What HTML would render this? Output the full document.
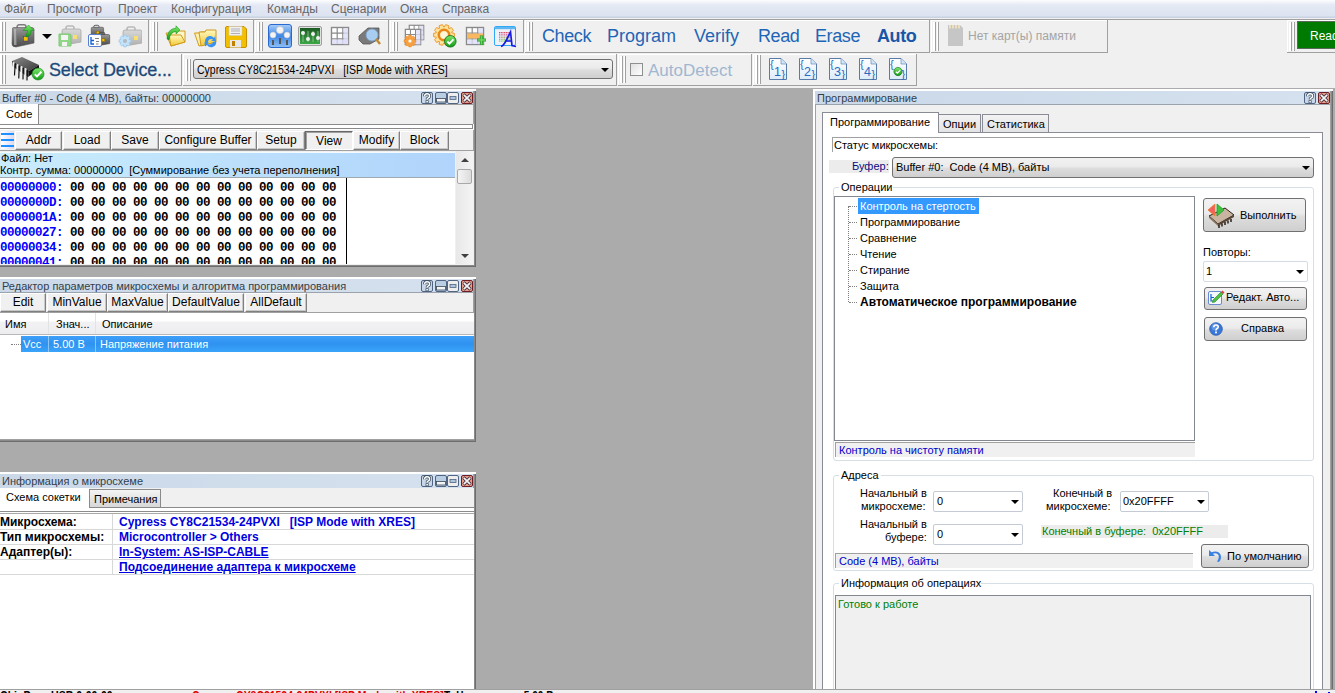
<!DOCTYPE html>
<html><head><meta charset="utf-8">
<style>
*{margin:0;padding:0;box-sizing:border-box}
html,body{width:1335px;height:693px;overflow:hidden;background:#f0f0f0;font-family:"Liberation Sans",sans-serif;font-size:11px;color:#000;position:relative}
.a{position:absolute}
.t{position:absolute;white-space:nowrap;line-height:13px}
#menu{left:0;top:0;width:1335px;height:18px;background:linear-gradient(#fdfdfe 0,#e4e9f4 5px,#dce3f1 16px,#c9d2e3 17px)}
#menu span{position:absolute;top:2px;color:#666;font-size:12px;line-height:14px}
.tb{position:absolute;background:#f0f0f0;border-right:1px solid #a0a0a0;border-bottom:1px solid #a0a0a0;box-shadow:inset 1px 1px 0 #fff}
.grip{position:absolute;width:4px;height:29px;border-left:1px solid #a0a0a0;border-right:1px solid #a0a0a0;box-shadow:-1px 0 0 #fff, -2px 0 0 #fff, inset -1px 0 0 #fff}
.mdi{position:absolute;background:#ababab}
.tool{color:#1f65b5;font-size:18px;top:26px;line-height:20px;letter-spacing:-.4px}
.pan{position:absolute;background:#f0f0f0;border-top:2px solid #fff;border-left:2px solid #fff;box-shadow:inset -1px -1px 0 #6d6d6d, inset -2px -2px 0 #8a8a8a, inset -3px -3px 0 #a0a0a0}
.ttl{position:absolute;left:0;right:3px;top:0;height:14px;background:linear-gradient(90deg,#cad8e8,#d5e1ee);color:#33404a;border-bottom:1px solid #9aa3ad}
.ttl span{position:absolute;left:2px;top:1px;line-height:12px}
.wb{position:absolute;top:1px;width:12px;height:12px}
.btn{position:absolute;height:19px;background:#f0f0f0;border-left:1px solid #fff;border-top:1px solid #fff;border-right:1px solid #808080;border-bottom:1px solid #808080;box-shadow:inset -1px -1px 0 #c8c8c8;text-align:center;line-height:16px;font-size:12px}
.hex{position:absolute;left:0;font-family:"Liberation Mono",monospace;font-weight:bold;font-size:12.5px;letter-spacing:-.5px;line-height:15px;white-space:pre;color:#000}
.hex b{color:#0000ff}
.lnk{color:#0000e0;font-weight:bold;font-size:12px}
</style></head><body>
<div id="menu" class="a">
<span style="left:4px">Файл</span>
<span style="left:47px">Просмотр</span>
<span style="left:118px">Проект</span>
<span style="left:171px">Конфигурация</span>
<span style="left:267px">Команды</span>
<span style="left:331px">Сценарии</span>
<span style="left:400px">Окна</span>
<span style="left:442px">Справка</span>
</div>
<div class="a" style="left:0;top:19px;width:1335px;height:1px;background:#a0a0a0"></div>

<!-- toolbar row 1 -->
<div class="tb" style="left:0;top:20px;width:149px;height:33px"></div>
<div class="tb" style="left:150px;top:20px;width:104px;height:33px"></div>
<div class="tb" style="left:255px;top:20px;width:134px;height:33px"></div>
<div class="tb" style="left:390px;top:20px;width:134px;height:33px"></div>
<div class="tb" style="left:525px;top:20px;width:405px;height:33px"></div>
<div class="tb" style="left:931px;top:20px;width:177px;height:33px"></div>
<div class="tb" style="left:1287px;top:20px;width:50px;height:33px"></div>
<div class="grip" style="left:2px;top:22px"></div>
<div class="grip" style="left:154px;top:22px"></div>
<div class="grip" style="left:259px;top:22px"></div>
<div class="grip" style="left:394px;top:22px"></div>
<div class="grip" style="left:529px;top:22px"></div>
<div class="grip" style="left:935px;top:22px"></div>
<div class="grip" style="left:1291px;top:22px"></div>

<!-- toolbar row 2 -->
<div class="tb" style="left:0;top:54px;width:182px;height:32px"></div>
<div class="tb" style="left:183px;top:54px;width:434px;height:32px"></div>
<div class="tb" style="left:618px;top:54px;width:134px;height:32px"></div>
<div class="tb" style="left:753px;top:54px;width:164px;height:32px"></div>
<div class="grip" style="left:2px;top:55px"></div>
<div class="grip" style="left:187px;top:59px;height:22px"></div>
<div class="grip" style="left:622px;top:56px;height:27px"></div>
<div class="grip" style="left:757px;top:55px"></div>

<div class="t tool" style="left:542px">Check</div>
<div class="t tool" style="left:607px;letter-spacing:0">Program</div>
<div class="t tool" style="left:694px;letter-spacing:0">Verify</div>
<div class="t tool" style="left:758px">Read</div>
<div class="t tool" style="left:815px">Erase</div>
<div class="t tool" style="left:877px;font-weight:bold;color:#1a56a8">Auto</div>

<div class="t" style="left:968px;top:30px;color:#a4a4a4;font-size:12px">Нет карт(ы) памяти</div>
<div class="a" style="left:1297px;top:21px;width:40px;height:28px;background:#007a00;border:1px solid #5a6a5a"></div>
<div class="t" style="left:1310px;top:30px;color:#fff;font-size:12px">Ready</div>

<div class="t" style="left:49px;top:59px;color:#1d4a7a;font-size:18px;line-height:22px;letter-spacing:-.15px;-webkit-text-stroke:.3px #1d4a7a">Select Device...</div>
<div class="a" style="left:193px;top:59px;width:420px;height:20px;border:1px solid #707070;border-radius:3px;background:linear-gradient(#f2f2f2,#ebebeb 45%,#dddddd 55%,#cfcfcf)"></div>
<div class="t" style="left:197px;top:64px;font-size:12px;transform:scaleX(.873);transform-origin:0 0">Cypress CY8C21534-24PVXI &nbsp; [ISP Mode with XRES]</div>
<div class="a" style="left:630px;top:63px;width:13px;height:13px;border:1px solid #8e8f8f;background:linear-gradient(135deg,#e0e0e0,#fff)"></div>
<div class="t" style="left:648px;top:61px;color:#9fb7d0;font-size:17px;line-height:20px">AutoDetect</div>

<svg class="a" style="left:0;top:0" width="0" height="0"><defs>
<linearGradient id="gbc" x1="0" y1="0" x2="0" y2="1"><stop offset="0" stop-color="#9a9a9a"/><stop offset=".5" stop-color="#6e6e6e"/><stop offset="1" stop-color="#4a4a4a"/></linearGradient>
<linearGradient id="gbcl" x1="0" y1="0" x2="0" y2="1"><stop offset="0" stop-color="#d8d8d8"/><stop offset="1" stop-color="#b0b0b0"/></linearGradient>
<linearGradient id="gfold" x1="0" y1="0" x2="0" y2="1"><stop offset="0" stop-color="#fff8c0"/><stop offset="1" stop-color="#f2c830"/></linearGradient>
<linearGradient id="ggrn" x1="0" y1="0" x2="0" y2="1"><stop offset="0" stop-color="#7be86a"/><stop offset="1" stop-color="#149a1a"/></linearGradient>
<linearGradient id="gblue" x1="0" y1="0" x2="0" y2="1"><stop offset="0" stop-color="#a8cdf8"/><stop offset=".5" stop-color="#3f87e6"/><stop offset="1" stop-color="#8fc0f5"/></linearGradient>
<linearGradient id="geq" x1="0" y1="0" x2="0" y2="1"><stop offset="0" stop-color="#1c5a22"/><stop offset="1" stop-color="#3aa845"/></linearGradient>
<linearGradient id="gchip" x1="0" y1="0" x2="0" y2="1"><stop offset="0" stop-color="#5a5a5a"/><stop offset="1" stop-color="#1a1a1a"/></linearGradient>
<g id="bc"><rect x="6" y="2" width="8" height="4" rx="2" fill="none" stroke="#555" stroke-width="1.5"/><path d="M2 7 Q2 5 4 5 L19 5 Q21 5 21 7 L21 18 L4 21 Q2 21 2 19 Z" fill="url(#gbc)" stroke="#3a3a3a" stroke-width=".8"/><rect x="10" y="11" width="4" height="4" fill="#f5c000" stroke="#6a5000" stroke-width=".5"/></g>
<g id="bcl"><rect x="6" y="2" width="8" height="4" rx="2" fill="none" stroke="#b8b8b8" stroke-width="1.5"/><path d="M2 7 Q2 5 4 5 L19 5 Q21 5 21 7 L21 18 L4 21 Q2 21 2 19 Z" fill="url(#gbcl)" stroke="#a8a8a8" stroke-width=".8"/><rect x="13" y="11" width="4" height="4" fill="#f8e070"/></g>
<g id="chk"><circle cx="6" cy="6" r="5.5" fill="url(#ggrn)" stroke="#0d6a10" stroke-width=".8"/><path d="M3.2 6.2 L5.2 8.2 L9 4.2" fill="none" stroke="#fff" stroke-width="1.8"/></g>
<g id="grid"><rect x="1.5" y="1.5" width="17" height="17" fill="#fff" stroke="#8a8a8a" stroke-width="1.4"/><path d="M7.2 1.5V18.5M12.8 1.5V18.5M1.5 7.2H18.5M1.5 12.8H18.5" stroke="#8a8a8a" stroke-width="1.2"/><rect x="13.5" y="2.2" width="4.5" height="16" fill="#dcdcf8" opacity=".8"/><rect x="2.2" y="13.5" width="16" height="4.5" fill="#dcdcf8" opacity=".8"/></g>
<linearGradient id="gdoc" x1="0" y1="0" x2="0" y2="1"><stop offset="0" stop-color="#fff"/><stop offset="1" stop-color="#dcecfa"/></linearGradient><g id="doc"><path d="M0.5 0.5 H12 L17.5 6 V21.5 H0.5 Z" fill="url(#gdoc)" stroke="#5a7aa8" stroke-width="1"/><path d="M12 0.5 V6 H17.5" fill="#cfe6f8" stroke="#5a7aa8" stroke-width=".6"/></g>
</defs></svg>
<!-- row1 icons -->
<svg class="a" style="left:11px;top:24px" width="24" height="24" viewBox="0 0 24 24"><rect x="6" y="0.8" width="9" height="4" rx="2" fill="none" stroke="#7a7a7a" stroke-width="1.4"/><path d="M1.5 5 Q1 3.5 3 3.5 L21 3.5 Q23 3.5 23 5.5 L23 19 L5 23 Q1 23 1 20 Z" fill="url(#gbc)" stroke="#555" stroke-width=".6"/><path d="M3 5 L5 5 L5.5 21 L3 21 Z" fill="#c8c8c8" opacity=".6"/><rect x="12.5" y="12.5" width="4.5" height="4.5" fill="#f5c000" stroke="#2a3a8a" stroke-width=".5"/><path d="M17.5 1 L23 6.5 L19.8 6.5 L19.8 9 Q19.5 12 15 13 L15 10 Q16.5 9.5 16.5 8 L16.5 6.5 L12 6.5 Z" fill="url(#ggrn)" stroke="#0b8a10" stroke-width=".5"/></svg>
<svg class="a" style="left:42px;top:34px" width="10" height="6"><path d="M0 0H10L5 5Z" fill="#000"/></svg>
<svg class="a" style="left:58px;top:24px" width="24" height="24" viewBox="0 0 24 24"><g transform="translate(2,0)"><use href="#bcl"/></g><path d="M1 10 H12 L13 11 V22 H1 Z" fill="#90d888" stroke="#7cc874" stroke-width="1"/><rect x="3" y="11" width="7" height="5" fill="#f4f4f4"/><rect x="4" y="18" width="5" height="4" fill="#f4f4f4"/></svg>
<svg class="a" style="left:88px;top:24px" width="24" height="24" viewBox="0 0 24 24"><g transform="scale(.65) translate(3,0)"><use href="#bc"/></g><g transform="translate(7,7) scale(.7)"><use href="#bc"/></g><rect x="0.5" y="10.5" width="13" height="12" rx="1.5" fill="#fff" stroke="#5a7ed0" stroke-width="1"/><path d="M3 13 V20 H6 M3 16.5 H6" stroke="#1060d8" stroke-width="1.3" fill="none"/><path d="M7 14.5H11M8 17.5H11M8 20H10.5" stroke="#808080" stroke-width="1.2"/></svg>
<svg class="a" style="left:118px;top:24px" width="24" height="24" viewBox="0 0 24 24"><g transform="translate(3,1)"><use href="#bcl"/></g><path d="M11.04 15.52 L12.88 15.80 L12.88 18.20 L11.04 18.48 L10.90 18.81 L12.00 20.31 L10.31 22.00 L8.81 20.90 L8.48 21.04 L8.20 22.88 L5.80 22.88 L5.52 21.04 L5.19 20.90 L3.69 22.00 L2.00 20.31 L3.10 18.81 L2.96 18.48 L1.12 18.20 L1.12 15.80 L2.96 15.52 L3.10 15.19 L2.00 13.69 L3.69 12.00 L5.19 13.10 L5.52 12.96 L5.80 11.12 L8.20 11.12 L8.48 12.96 L8.81 13.10 L10.31 12.00 L12.00 13.69 L10.90 15.19Z" fill="#c4e2f8" stroke="#9ccaee" stroke-width=".8"/><circle cx="7" cy="17" r="2" fill="#b0b8c0"/></svg>
<svg class="a" style="left:164px;top:25px" width="24" height="24" viewBox="0 0 24 24"><path d="M2 8 H8 L9 6 H21 V17 L7 21 Z" fill="#fff6c8" stroke="#d09a20" stroke-width="1"/><path d="M5 10 H17 L21 17 L7 21 Z" fill="url(#gfold)" stroke="#d09a20" stroke-width="1"/><path d="M3 14 Q3 4 12 3 L12 0.8 L16 5 L12 9 L12 6.5 Q6 7 5 15 Z" fill="url(#ggrn)" stroke="#0b8a10" stroke-width=".5"/></svg>
<svg class="a" style="left:194px;top:25px" width="24" height="24" viewBox="0 0 24 24"><path d="M0.5 8 H6 L6.5 7 H18 V18 L5 21 Z" fill="#fff0b0" stroke="#d09a20" stroke-width="1"/><path d="M5 7 H11 L12 5 H22 V17 L7 21 Z" fill="url(#gfold)" stroke="#d09a20" stroke-width="1"/><path d="M12 19 A5 5 0 0 1 20 13 L21 11 L22 16 L17 16 L19 14.5 A3.3 3.3 0 0 0 14 18 Z M22 16 A5 5 0 0 1 13 20 L11 21.5 L10.5 17 L15 17 L13.5 18.5 A3.3 3.3 0 0 0 19 17 Z" fill="#3a92f0"/></svg>
<svg class="a" style="left:224px;top:25px" width="24" height="24" viewBox="0 0 24 24"><path d="M1.5 3 Q1.5 1.5 3 1.5 H20 L22.5 4 V21 Q22.5 22.5 21 22.5 H3 Q1.5 22.5 1.5 21 Z" fill="#f2c000" stroke="#c89000" stroke-width="1"/><rect x="5" y="1.5" width="13" height="9" fill="#f0f0f0" stroke="#c8c8c8" stroke-width=".5"/><path d="M7 4H16M7 6H16M7 8.5H16" stroke="#b0b0b0" stroke-width="1"/><rect x="6" y="15" width="11" height="7.5" fill="#e8e8e8"/><rect x="8" y="16" width="3" height="5" fill="#c08000"/></svg>
<svg class="a" style="left:268px;top:24px" width="24" height="24" viewBox="0 0 24 24"><rect x="0.5" y="0.5" width="23" height="23" rx="2.5" fill="url(#gblue)" stroke="#2a6ad0" stroke-width="1"/><circle cx="12" cy="6" r="3.6" fill="#f4f4f4" stroke="#c0c0c0" stroke-width=".5"/><circle cx="5" cy="11" r="3" fill="#f4f4f4" stroke="#c0c0c0" stroke-width=".5"/><circle cx="19" cy="11" r="3" fill="#f4f4f4" stroke="#c0c0c0" stroke-width=".5"/><rect x="4" y="16" width="2" height="5" fill="#555"/><rect x="11" y="14" width="2" height="6" fill="#555"/><rect x="18" y="16" width="2" height="5" fill="#555"/></svg>
<svg class="a" style="left:298px;top:26px" width="24" height="20" viewBox="0 0 24 20"><rect x="0.5" y="0.5" width="23" height="19" rx="1.5" fill="#e0e0e0" stroke="#a0a0a0" stroke-width="1"/><rect x="2" y="2" width="20" height="16" fill="url(#geq)"/><path d="M5 5V16M10 5V16M15 5V16M20 5V16" stroke="#b0d0b0" stroke-width=".7"/><circle cx="5" cy="7" r="2" fill="#f0f0f0"/><circle cx="10" cy="13" r="2" fill="#f0f0f0"/><circle cx="15" cy="8" r="2" fill="#f0f0f0"/><circle cx="20" cy="12" r="2" fill="#f0f0f0"/></svg>
<svg class="a" style="left:330px;top:26px" width="20" height="20" viewBox="0 0 20 20"><use href="#grid"/></svg>
<svg class="a" style="left:358px;top:26px" width="24" height="20" viewBox="0 0 24 20"><path d="M1 10 L10 2 H21 V13 L12 18 H5 L1 14 Z" fill="#7a7a7a" stroke="#555" stroke-width=".8"/><circle cx="14" cy="9" r="6" fill="#a8cdf0" stroke="#7aa0c8" stroke-width=".8"/><path d="M18 13 L22 18" stroke="#c08a30" stroke-width="2.4"/></svg>
<svg class="a" style="left:403px;top:24px" width="24" height="24" viewBox="0 0 24 24"><g transform="translate(5,0) scale(.85)"><use href="#grid"/></g><g transform="translate(1,4) scale(.9)"><use href="#grid"/></g><path d="M11.04 15.52 L12.88 15.80 L12.88 18.20 L11.04 18.48 L10.90 18.81 L12.00 20.31 L10.31 22.00 L8.81 20.90 L8.48 21.04 L8.20 22.88 L5.80 22.88 L5.52 21.04 L5.19 20.90 L3.69 22.00 L2.00 20.31 L3.10 18.81 L2.96 18.48 L1.12 18.20 L1.12 15.80 L2.96 15.52 L3.10 15.19 L2.00 13.69 L3.69 12.00 L5.19 13.10 L5.52 12.96 L5.80 11.12 L8.20 11.12 L8.48 12.96 L8.81 13.10 L10.31 12.00 L12.00 13.69 L10.90 15.19Z" fill="#f7a040" stroke="#e88a2a" stroke-width=".6"/><circle cx="7" cy="17" r="1.6" fill="#fff"/></svg>
<svg class="a" style="left:433px;top:24px" width="24" height="24" viewBox="0 0 24 24"><path d="M18.69 8.78 L21.36 9.32 L21.36 12.68 L18.69 13.22 L18.52 13.72 L20.37 15.73 L18.40 18.45 L15.91 17.32 L15.49 17.62 L15.80 20.34 L12.60 21.38 L11.26 19.00 L10.74 19.00 L9.40 21.38 L6.20 20.34 L6.51 17.62 L6.09 17.32 L3.60 18.45 L1.63 15.73 L3.48 13.72 L3.31 13.22 L0.64 12.68 L0.64 9.32 L3.31 8.78 L3.48 8.28 L1.63 6.27 L3.60 3.55 L6.09 4.68 L6.51 4.38 L6.20 1.66 L9.40 0.62 L10.74 3.00 L11.26 3.00 L12.60 0.62 L15.80 1.66 L15.49 4.38 L15.91 4.68 L18.40 3.55 L20.37 6.27 L18.52 8.28Z" fill="#ffe39a" stroke="#e89a30" stroke-width="1"/><circle cx="11" cy="11" r="5.2" fill="none" stroke="#e8861a" stroke-width="2.6"/><circle cx="11" cy="11" r="3.6" fill="#fff6d8"/><g transform="translate(11,11)"><use href="#chk" transform="scale(1.05)"/></g></svg>
<svg class="a" style="left:465px;top:26px" width="22" height="22" viewBox="0 0 22 22"><use href="#grid"/><rect x="2" y="7.5" width="16" height="5" fill="#f8b860"/><path d="M12 14H21M16.5 9.5V19" stroke="#2a9a2a" stroke-width="3.2"/><path d="M12.5 14H20.5M16.5 10V18.5" stroke="#6ad860" stroke-width="1.6"/></svg>
<svg class="a" style="left:494px;top:26px" width="23" height="22" viewBox="0 0 23 22"><rect x="0.5" y="0.5" width="21" height="19" rx="1.5" fill="#f0f0fa" stroke="#30a8f8" stroke-width="1"/><rect x="1" y="1" width="20" height="2.2" fill="#60b8f0"/><rect x="5.0" y="6.0" width="1.1" height="1.1" fill="#d04060"/><rect x="6.7" y="6.0" width="1.1" height="1.1" fill="#d04060"/><rect x="8.4" y="6.0" width="1.1" height="1.1" fill="#d04060"/><rect x="10.1" y="6.0" width="1.1" height="1.1" fill="#d04060"/><rect x="11.8" y="6.0" width="1.1" height="1.1" fill="#d04060"/><rect x="13.5" y="6.0" width="1.1" height="1.1" fill="#d04060"/><rect x="15.2" y="6.0" width="1.1" height="1.1" fill="#d04060"/><rect x="5.0" y="7.7" width="1.1" height="1.1" fill="#d86080"/><rect x="6.7" y="7.7" width="1.1" height="1.1" fill="#d86080"/><rect x="8.4" y="7.7" width="1.1" height="1.1" fill="#d86080"/><rect x="10.1" y="7.7" width="1.1" height="1.1" fill="#d86080"/><rect x="11.8" y="7.7" width="1.1" height="1.1" fill="#d86080"/><rect x="13.5" y="7.7" width="1.1" height="1.1" fill="#d86080"/><rect x="15.2" y="7.7" width="1.1" height="1.1" fill="#d86080"/><rect x="5.0" y="9.4" width="1.1" height="1.1" fill="#c080a0"/><rect x="6.7" y="9.4" width="1.1" height="1.1" fill="#c080a0"/><rect x="8.4" y="9.4" width="1.1" height="1.1" fill="#c080a0"/><rect x="10.1" y="9.4" width="1.1" height="1.1" fill="#c080a0"/><rect x="11.8" y="9.4" width="1.1" height="1.1" fill="#c080a0"/><rect x="13.5" y="9.4" width="1.1" height="1.1" fill="#c080a0"/><rect x="15.2" y="9.4" width="1.1" height="1.1" fill="#c080a0"/><rect x="5.0" y="11.1" width="1.1" height="1.1" fill="#a0a060"/><rect x="6.7" y="11.1" width="1.1" height="1.1" fill="#a0a060"/><rect x="8.4" y="11.1" width="1.1" height="1.1" fill="#a0a060"/><rect x="10.1" y="11.1" width="1.1" height="1.1" fill="#a0a060"/><rect x="11.8" y="11.1" width="1.1" height="1.1" fill="#a0a060"/><rect x="13.5" y="11.1" width="1.1" height="1.1" fill="#a0a060"/><rect x="15.2" y="11.1" width="1.1" height="1.1" fill="#a0a060"/><rect x="5.0" y="12.8" width="1.1" height="1.1" fill="#80c060"/><rect x="6.7" y="12.8" width="1.1" height="1.1" fill="#80c060"/><rect x="8.4" y="12.8" width="1.1" height="1.1" fill="#80c060"/><rect x="10.1" y="12.8" width="1.1" height="1.1" fill="#80c060"/><rect x="11.8" y="12.8" width="1.1" height="1.1" fill="#80c060"/><rect x="13.5" y="12.8" width="1.1" height="1.1" fill="#80c060"/><rect x="15.2" y="12.8" width="1.1" height="1.1" fill="#80c060"/><rect x="5.0" y="14.5" width="1.1" height="1.1" fill="#60d040"/><rect x="6.7" y="14.5" width="1.1" height="1.1" fill="#60d040"/><rect x="8.4" y="14.5" width="1.1" height="1.1" fill="#60d040"/><rect x="10.1" y="14.5" width="1.1" height="1.1" fill="#60d040"/><rect x="11.8" y="14.5" width="1.1" height="1.1" fill="#60d040"/><rect x="13.5" y="14.5" width="1.1" height="1.1" fill="#60d040"/><rect x="15.2" y="14.5" width="1.1" height="1.1" fill="#60d040"/><path d="M7 20.5 Q9 20 12 15 L16.5 6 L18 19.5 L22 20.5 M11 15 L17.2 15" fill="none" stroke="#1a1ae8" stroke-width="1.7"/></svg>
<svg class="a" style="left:948px;top:25px" width="15" height="21" viewBox="0 0 15 21"><path d="M0 0 H12 L15 3 V21 H0 Z" fill="#c6c6c6"/><rect x="1" y="0" width="2" height="3.5" fill="#ece0c0"/><rect x="4" y="0" width="2" height="3.5" fill="#ece0c0"/><rect x="7" y="0" width="2" height="3.5" fill="#ece0c0"/><rect x="10" y="0" width="2" height="3.5" fill="#ece0c0"/></svg>
<!-- row2 icons -->
<svg class="a" style="left:8px;top:52px" width="40" height="34" viewBox="0 0 40 34"><defs><linearGradient id="gct" x1="0" y1="0" x2="1" y2="1"><stop offset="0" stop-color="#8a8a8a"/><stop offset="1" stop-color="#3a3a3a"/></linearGradient></defs><path d="M4 9 L14 5 L31 13 L21 19 Z" fill="url(#gct)"/><path d="M21 19 L31 13 L31 17 L20 25 Z" fill="#111"/><path d="M4 9 L21 19 L20 25 L4 14 Z" fill="#222"/><g stroke-linecap="round"><path d="M5.5 11 L5 22" stroke="#f0f0f0" stroke-width="2.2"/><path d="M7.2 12 L6.5 23" stroke="#111" stroke-width="1.2"/><path d="M9.5 13 L9.5 25" stroke="#f0f0f0" stroke-width="2.2"/><path d="M11.2 14 L10.8 26" stroke="#111" stroke-width="1.2"/><path d="M13.5 15 L13.5 27" stroke="#f0f0f0" stroke-width="2.2"/><path d="M15.2 16 L15 27" stroke="#111" stroke-width="1.2"/><path d="M17.5 17 L17.5 28" stroke="#e8e8e8" stroke-width="2.2"/><path d="M19.2 18 L19 28" stroke="#111" stroke-width="1.2"/></g><circle cx="30" cy="22" r="6" fill="url(#ggrn)" stroke="#0d7a10" stroke-width=".6"/><path d="M26.8 22.2 L29 24.4 L33.4 19.8" fill="none" stroke="#fff" stroke-width="2"/></svg>
<svg class="a" style="left:769px;top:58px" width="18" height="22" viewBox="0 0 18 22"><use href="#doc"/><text x="1" y="10" font-family="Liberation Sans" font-size="11" fill="#2a6ac0">{</text><text x="5" y="18" font-family="Liberation Sans" font-size="12.5" fill="#2a6ac0">1</text><text x="12.5" y="20" font-family="Liberation Sans" font-size="11" fill="#2a6ac0">}</text></svg>
<svg class="a" style="left:799px;top:58px" width="18" height="22" viewBox="0 0 18 22"><use href="#doc"/><text x="1" y="10" font-family="Liberation Sans" font-size="11" fill="#2a6ac0">{</text><text x="5" y="18" font-family="Liberation Sans" font-size="12.5" fill="#2a6ac0">2</text><text x="12.5" y="20" font-family="Liberation Sans" font-size="11" fill="#2a6ac0">}</text></svg>
<svg class="a" style="left:829px;top:58px" width="18" height="22" viewBox="0 0 18 22"><use href="#doc"/><text x="1" y="10" font-family="Liberation Sans" font-size="11" fill="#2a6ac0">{</text><text x="5" y="18" font-family="Liberation Sans" font-size="12.5" fill="#2a6ac0">3</text><text x="12.5" y="20" font-family="Liberation Sans" font-size="11" fill="#2a6ac0">}</text></svg>
<svg class="a" style="left:859px;top:58px" width="18" height="22" viewBox="0 0 18 22"><use href="#doc"/><text x="1" y="10" font-family="Liberation Sans" font-size="11" fill="#2a6ac0">{</text><text x="5" y="18" font-family="Liberation Sans" font-size="12.5" fill="#2a6ac0">4</text><text x="12.5" y="20" font-family="Liberation Sans" font-size="11" fill="#2a6ac0">}</text></svg>
<svg class="a" style="left:889px;top:58px" width="18" height="22" viewBox="0 0 18 22"><use href="#doc"/><text x="1" y="10" font-family="Liberation Sans" font-size="11" fill="#2a6ac0">{</text><g transform="translate(4.5,9)"><use href="#chk" transform="scale(.75)"/></g><text x="12.5" y="20" font-family="Liberation Sans" font-size="11" fill="#2a6ac0">}</text></svg>
<svg class="a" style="left:601px;top:68px" width="8" height="5"><path d="M0 0H8L4.0 4Z" fill="#000"/></svg>

<!-- MDI -->
<div class="mdi" style="left:0;top:88px;width:1335px;height:601px"></div>

<!-- Buffer panel -->
<div class="pan" style="left:-2px;top:89px;width:478px;height:178px">
  <div class="ttl"><span>Buffer #0 - Code (4 MB), байты: 00000000</span>
    <svg class="wb" style="left:421px" viewBox="0 0 12 12"><rect x=".5" y=".5" width="11" height="11" rx="1.5" fill="#c8d8ea" stroke="#4f6583"/><path d="M3.5 4.3 Q3.5 1.8 6 1.8 Q8.6 1.8 8.6 4 Q8.6 5.4 7 6.1 Q6.1 6.5 6.1 7.6" fill="none" stroke="#3a4a5a" stroke-width="3"/><rect x="4.6" y="8.3" width="3" height="2.8" fill="#3a4a5a"/><path d="M3.5 4.3 Q3.5 1.8 6 1.8 Q8.6 1.8 8.6 4 Q8.6 5.4 7 6.1 Q6.1 6.5 6.1 7.6" fill="none" stroke="#fff" stroke-width="1.5"/><rect x="5.3" y="9" width="1.6" height="1.5" fill="#fff"/></svg>
<svg class="wb" style="left:435px" viewBox="0 0 12 12"><rect x=".5" y=".5" width="11" height="11" rx="1.5" fill="#b9cde3" stroke="#4f6583"/><rect x="1.5" y="6.5" width="9" height="3.5" fill="#f4f4f4" stroke="#3a4a5a" stroke-width=".8"/></svg>
<svg class="wb" style="left:447px" viewBox="0 0 12 12"><rect x=".5" y=".5" width="11" height="11" rx="1.5" fill="#eeeeee" stroke="#4f6583"/><rect x="3" y="4.5" width="6" height="3" fill="#b0c4dc" stroke="#4f6583" stroke-width=".8"/></svg>
<svg class="wb" style="left:461px" viewBox="0 0 12 12"><rect x=".5" y=".5" width="11" height="11" rx="1.5" fill="#e89a88" stroke="#6b1f24"/><path d="M2.5 2.5 L9.5 9.5 M9.5 2.5 L2.5 9.5" stroke="#3a2a3a" stroke-width="3.2"/><path d="M2.8 2.8 L9.2 9.2 M9.2 2.8 L2.8 9.2" stroke="#f4f4f4" stroke-width="1.8"/></svg>
  </div>
</div>

<!-- Param panel -->
<div class="pan" style="left:-2px;top:277px;width:478px;height:165px">
  <div class="ttl"><span>Редактор параметров микросхемы и алгоритма программирования</span>
    <svg class="wb" style="left:421px" viewBox="0 0 12 12"><rect x=".5" y=".5" width="11" height="11" rx="1.5" fill="#c8d8ea" stroke="#4f6583"/><path d="M3.5 4.3 Q3.5 1.8 6 1.8 Q8.6 1.8 8.6 4 Q8.6 5.4 7 6.1 Q6.1 6.5 6.1 7.6" fill="none" stroke="#3a4a5a" stroke-width="3"/><rect x="4.6" y="8.3" width="3" height="2.8" fill="#3a4a5a"/><path d="M3.5 4.3 Q3.5 1.8 6 1.8 Q8.6 1.8 8.6 4 Q8.6 5.4 7 6.1 Q6.1 6.5 6.1 7.6" fill="none" stroke="#fff" stroke-width="1.5"/><rect x="5.3" y="9" width="1.6" height="1.5" fill="#fff"/></svg>
<svg class="wb" style="left:435px" viewBox="0 0 12 12"><rect x=".5" y=".5" width="11" height="11" rx="1.5" fill="#b9cde3" stroke="#4f6583"/><rect x="1.5" y="6.5" width="9" height="3.5" fill="#f4f4f4" stroke="#3a4a5a" stroke-width=".8"/></svg>
<svg class="wb" style="left:447px" viewBox="0 0 12 12"><rect x=".5" y=".5" width="11" height="11" rx="1.5" fill="#eeeeee" stroke="#4f6583"/><rect x="3" y="4.5" width="6" height="3" fill="#b0c4dc" stroke="#4f6583" stroke-width=".8"/></svg>
<svg class="wb" style="left:461px" viewBox="0 0 12 12"><rect x=".5" y=".5" width="11" height="11" rx="1.5" fill="#e89a88" stroke="#6b1f24"/><path d="M2.5 2.5 L9.5 9.5 M9.5 2.5 L2.5 9.5" stroke="#3a2a3a" stroke-width="3.2"/><path d="M2.8 2.8 L9.2 9.2 M9.2 2.8 L2.8 9.2" stroke="#f4f4f4" stroke-width="1.8"/></svg>
  </div>
</div>

<!-- Info panel -->
<div class="pan" style="left:-2px;top:472px;width:478px;height:230px">
  <div class="ttl" style="border-bottom:none"><span>Информация о микросхеме</span>
    <svg class="wb" style="left:421px" viewBox="0 0 12 12"><rect x=".5" y=".5" width="11" height="11" rx="1.5" fill="#c8d8ea" stroke="#4f6583"/><path d="M3.5 4.3 Q3.5 1.8 6 1.8 Q8.6 1.8 8.6 4 Q8.6 5.4 7 6.1 Q6.1 6.5 6.1 7.6" fill="none" stroke="#3a4a5a" stroke-width="3"/><rect x="4.6" y="8.3" width="3" height="2.8" fill="#3a4a5a"/><path d="M3.5 4.3 Q3.5 1.8 6 1.8 Q8.6 1.8 8.6 4 Q8.6 5.4 7 6.1 Q6.1 6.5 6.1 7.6" fill="none" stroke="#fff" stroke-width="1.5"/><rect x="5.3" y="9" width="1.6" height="1.5" fill="#fff"/></svg>
<svg class="wb" style="left:435px" viewBox="0 0 12 12"><rect x=".5" y=".5" width="11" height="11" rx="1.5" fill="#b9cde3" stroke="#4f6583"/><rect x="1.5" y="6.5" width="9" height="3.5" fill="#f4f4f4" stroke="#3a4a5a" stroke-width=".8"/></svg>
<svg class="wb" style="left:447px" viewBox="0 0 12 12"><rect x=".5" y=".5" width="11" height="11" rx="1.5" fill="#eeeeee" stroke="#4f6583"/><rect x="3" y="4.5" width="6" height="3" fill="#b0c4dc" stroke="#4f6583" stroke-width=".8"/></svg>
<svg class="wb" style="left:461px" viewBox="0 0 12 12"><rect x=".5" y=".5" width="11" height="11" rx="1.5" fill="#e89a88" stroke="#6b1f24"/><path d="M2.5 2.5 L9.5 9.5 M9.5 2.5 L2.5 9.5" stroke="#3a2a3a" stroke-width="3.2"/><path d="M2.8 2.8 L9.2 9.2 M9.2 2.8 L2.8 9.2" stroke="#f4f4f4" stroke-width="1.8"/></svg>
  </div>
</div>

<!-- Programming panel -->
<div class="pan" style="left:813px;top:89px;width:520px;height:620px">
  <div class="ttl"><span>Программирование</span>
    <svg class="wb" style="left:489px" viewBox="0 0 12 12"><rect x=".5" y=".5" width="11" height="11" rx="1.5" fill="#c8d8ea" stroke="#4f6583"/><path d="M3.5 4.3 Q3.5 1.8 6 1.8 Q8.6 1.8 8.6 4 Q8.6 5.4 7 6.1 Q6.1 6.5 6.1 7.6" fill="none" stroke="#3a4a5a" stroke-width="3"/><rect x="4.6" y="8.3" width="3" height="2.8" fill="#3a4a5a"/><path d="M3.5 4.3 Q3.5 1.8 6 1.8 Q8.6 1.8 8.6 4 Q8.6 5.4 7 6.1 Q6.1 6.5 6.1 7.6" fill="none" stroke="#fff" stroke-width="1.5"/><rect x="5.3" y="9" width="1.6" height="1.5" fill="#fff"/></svg>
<svg class="wb" style="left:503px" viewBox="0 0 12 12"><rect x=".5" y=".5" width="11" height="11" rx="1.5" fill="#e89a88" stroke="#6b1f24"/><path d="M2.5 2.5 L9.5 9.5 M9.5 2.5 L2.5 9.5" stroke="#3a2a3a" stroke-width="3.2"/><path d="M2.8 2.8 L9.2 9.2 M9.2 2.8 L2.8 9.2" stroke="#f4f4f4" stroke-width="1.8"/></svg>
  </div>
</div>


<!-- Buffer panel content -->
<div class="a" style="left:1px;top:104px;width:473px;height:1px;background:#a0a0a0"></div>
<div class="a" style="left:0;top:104px;width:39px;height:21px;background:#fff;border-right:1px solid #8a8a8a"></div>
<div class="t" style="left:6px;top:108px;font-size:11px">Code</div>
<div class="a" style="left:0;top:124px;width:473px;height:5px;background:#fff;border:1px solid #8a8a8a;border-left:none"></div>
<div class="a" style="left:473px;top:124px;width:1px;height:6px;background:#fff"></div>
<div class="a" style="left:0;top:129px;width:474px;height:1px;background:#fff"></div>
<div class="a" style="left:1px;top:131px;width:13px;height:18px;background:linear-gradient(90deg,#fff,#dcd8f0)"></div>
<div class="a" style="left:1px;top:133px;width:13px;height:2px;background:#1e90ff"></div>
<div class="a" style="left:1px;top:139px;width:13px;height:2px;background:#1e90ff"></div>
<div class="a" style="left:1px;top:145px;width:13px;height:2px;background:#1e90ff"></div>
<div class="btn" style="left:15px;top:131px;width:47px">Addr</div>
<div class="btn" style="left:63px;top:131px;width:48px">Load</div>
<div class="btn" style="left:111px;top:131px;width:48px">Save</div>
<div class="btn" style="left:159px;top:131px;width:98px">Configure Buffer</div>
<div class="btn" style="left:257px;top:131px;width:48px">Setup</div>
<div class="btn" style="left:305px;top:131px;width:48px;border-left-color:#696969;border-top-color:#696969;border-right-color:#fff;border-bottom-color:#fff;box-shadow:inset 1px 1px 0 #a0a0a0;line-height:18px">View</div>
<div class="btn" style="left:353px;top:131px;width:47px">Modify</div>
<div class="btn" style="left:400px;top:131px;width:49px">Block</div>
<div class="a" style="left:0;top:150px;width:474px;height:1px;background:#a0a0a0"></div>
<div class="a" style="left:0;top:151px;width:474px;height:114px;background:#f0f0f0"></div>
<div class="a" style="left:0;top:152px;width:455px;height:26px;background:linear-gradient(90deg,#c9edfc,#b0d4fb);border-bottom:1px solid #a0a8b0;border-top:1px solid #f4fbff"></div>
<div class="t" style="left:1px;top:152px">Файл: Нет</div>
<div class="t" style="left:0;top:164px">Контр. сумма: 00000000 &nbsp;[Суммирование без учета переполнения]</div>
<div class="a" style="left:0;top:178px;width:455px;height:86px;background:#fff;overflow:hidden">
<div class="hex" style="top:3px"><b>00000000:</b> 00 00 00 00 00 00 00 00 00 00 00 00 00
<b>0000000D:</b> 00 00 00 00 00 00 00 00 00 00 00 00 00
<b>0000001A:</b> 00 00 00 00 00 00 00 00 00 00 00 00 00
<b>00000027:</b> 00 00 00 00 00 00 00 00 00 00 00 00 00
<b>00000034:</b> 00 00 00 00 00 00 00 00 00 00 00 00 00
<b>00000041:</b> 00 00 00 00 00 00 00 00 00 00 00 00 00</div>
<div class="a" style="left:346px;top:0;width:1px;height:86px;background:#000"></div>
</div>
<div class="a" style="left:456px;top:151px;width:17px;height:113px;background:linear-gradient(90deg,#e8e8e8,#f4f4f4)"></div>
<div class="a" style="left:461px;top:158px;width:0;height:0;border-left:4px solid transparent;border-right:4px solid transparent;border-bottom:4px solid #404040"></div>
<div class="a" style="left:457px;top:169px;width:15px;height:15px;border:1px solid #a8a8a8;border-radius:2px;background:linear-gradient(90deg,#f4f4f4,#dcdcdc)"></div>
<div class="a" style="left:461px;top:254px;width:0;height:0;border-left:4px solid transparent;border-right:4px solid transparent;border-top:4px solid #404040"></div>

<!-- Param panel content -->
<div class="btn" style="left:0;top:293px;width:46px">Edit</div>
<div class="btn" style="left:47px;top:293px;width:60px">MinValue</div>
<div class="btn" style="left:107px;top:293px;width:61px">MaxValue</div>
<div class="btn" style="left:168px;top:293px;width:76px">DefaultValue</div>
<div class="btn" style="left:245px;top:293px;width:62px">AllDefault</div>
<div class="a" style="left:0;top:312px;width:474px;height:127px;background:#fff;border-top:1px solid #a0a0a0"></div>
<div class="a" style="left:0;top:313px;width:474px;height:22px;background:linear-gradient(#fff 0,#fff 8px,#f2f2f4 9px,#ededf0 21px);border-bottom:1px solid #b8b8bc"></div>
<div class="a" style="left:48px;top:313px;width:1px;height:21px;background:#e3e3e3"></div>
<div class="a" style="left:95px;top:313px;width:1px;height:21px;background:#e3e3e3"></div>
<div class="t" style="left:5px;top:318px">Имя</div>
<div class="t" style="left:56px;top:318px">Знач...</div>
<div class="t" style="left:102px;top:318px">Описание</div>
<div class="a" style="left:11px;top:344px;width:10px;border-top:1px dotted #808080"></div>
<div class="a" style="left:21px;top:336px;width:453px;height:16px;background:linear-gradient(#3d9ff8,#2f92f0 50%,#3aa4fa)"></div>
<div class="a" style="left:48px;top:336px;width:1px;height:16px;background:#8ac7f7"></div>
<div class="a" style="left:95px;top:336px;width:1px;height:16px;background:#8ac7f7"></div>
<div class="t" style="left:23px;top:338px;color:#fff">Vcc</div>
<div class="t" style="left:53px;top:338px;color:#fff">5.00 В</div>
<div class="t" style="left:100px;top:338px;color:#fff">Напряжение питания</div>
<!-- Info panel content -->
<div class="a" style="left:0;top:488px;width:474px;height:19px;background:#f0f0f0"></div>
<div class="a" style="left:0;top:507px;width:474px;height:1px;background:#8a8a8a"></div>
<div class="a" style="left:0;top:508px;width:474px;height:3px;background:#fff"></div>
<div class="a" style="left:0;top:488px;width:89px;height:20px;background:#fff"></div>
<div class="t" style="left:6px;top:491px;font-size:11px">Схема сокетки</div>
<div class="a" style="left:89px;top:489px;width:72px;height:19px;background:linear-gradient(#f4f4f4,#e2e2e2 60%,#d8d8d8);border:1px solid #8a8a8a"></div>
<div class="t" style="left:94px;top:493px;font-size:11px">Примечания</div>
<div class="a" style="left:0;top:511px;width:474px;height:1px;background:#8c8c8c"></div>
<div class="a" style="left:0;top:512px;width:474px;height:1px;background:#fff"></div>
<div class="a" style="left:0;top:513px;width:474px;height:1px;background:#a8a8a8"></div>
<div class="a" style="left:0;top:514px;width:474px;height:175px;background:#fff"></div>
<div class="a" style="left:0;top:529px;width:474px;height:1px;background:#d8d8d8"></div>
<div class="a" style="left:0;top:544px;width:474px;height:1px;background:#d8d8d8"></div>
<div class="a" style="left:0;top:559px;width:474px;height:1px;background:#d8d8d8"></div>
<div class="a" style="left:0;top:574px;width:474px;height:1px;background:#d8d8d8"></div>
<div class="a" style="left:112px;top:514px;width:1px;height:60px;background:#d8d8d8"></div>
<div class="t" style="left:0;top:516px;font-weight:bold;font-size:12px">Микросхема:</div>
<div class="t" style="left:0;top:531px;font-weight:bold;font-size:12px">Тип микросхемы:</div>
<div class="t" style="left:0;top:546px;font-weight:bold;font-size:12px">Адаптер(ы):</div>
<div class="t lnk" style="left:119px;top:516px">Cypress CY8C21534-24PVXI &nbsp; [ISP Mode with XRES]</div>
<div class="t lnk" style="left:119px;top:531px">Microcontroller &gt; Others</div>
<div class="t lnk" style="left:119px;top:546px;text-decoration:underline">In-System: AS-ISP-CABLE</div>
<div class="t lnk" style="left:119px;top:561px;text-decoration:underline">Подсоединение адаптера к микросхеме</div>
<!-- Programming panel content -->
<div class="a" style="left:822px;top:132px;width:501px;height:560px;background:#fff;border:1px solid #898c95;border-bottom:none"></div>
<div class="a" style="left:822px;top:112px;width:117px;height:21px;background:#fff;border:1px solid #898c95;border-bottom:none"></div>
<div class="t" style="left:830px;top:116px">Программирование</div>
<div class="a" style="left:939px;top:114px;width:42px;height:18px;background:linear-gradient(#f3f3f3,#e3e3e3);border:1px solid #898c95;border-left:none;border-bottom:none"></div>
<div class="t" style="left:943px;top:118px">Опции</div>
<div class="a" style="left:982px;top:114px;width:67px;height:18px;background:linear-gradient(#f3f3f3,#e3e3e3);border:1px solid #898c95;border-bottom:none"></div>
<div class="t" style="left:987px;top:118px">Статистика</div>
<div class="a" style="left:832px;top:137px;width:478px;height:15px;border-top:1px solid #a0a0a0;border-left:1px solid #a0a0a0"></div>
<div class="t" style="left:834px;top:139px">Статус микросхемы:</div>
<div class="a" style="left:829px;top:160px;width:60px;height:13px;background:#ececec"></div>
<div class="t" style="left:852px;top:160px;color:#0a0a80">Буфер:</div>
<div class="a" style="left:892px;top:157px;width:422px;height:21px;border:1px solid #707070;border-radius:3px;background:linear-gradient(#f2f2f2,#ebebeb 45%,#dddddd 55%,#cfcfcf)"></div>
<div class="t" style="left:896px;top:161px">Buffer #0: &nbsp;Code (4 MB), байты</div>
<svg class="a" style="left:1302px;top:166px" width="8" height="5"><path d="M0 0H8L4.0 4Z" fill="#000"/></svg>

<div class="a" style="left:833px;top:187px;width:481px;height:274px;border:1px solid #d5dfe5;border-radius:3px"></div>
<div class="a" style="left:839px;top:182px;width:54px;height:12px;background:#fff"></div>
<div class="t" style="left:841px;top:181px">Операции</div>
<div class="a" style="left:834px;top:196px;width:361px;height:245px;border:1px solid #828790;background:#fff"></div>
<div class="a" style="left:848px;top:206px;width:1px;height:96px;border-left:1px dotted #808080"></div>
<div class="a" style="left:849px;top:206px;width:8px;border-top:1px dotted #808080"></div>
<div class="a" style="left:849px;top:222px;width:8px;border-top:1px dotted #808080"></div>
<div class="a" style="left:849px;top:238px;width:8px;border-top:1px dotted #808080"></div>
<div class="a" style="left:849px;top:254px;width:8px;border-top:1px dotted #808080"></div>
<div class="a" style="left:849px;top:270px;width:8px;border-top:1px dotted #808080"></div>
<div class="a" style="left:849px;top:286px;width:8px;border-top:1px dotted #808080"></div>
<div class="a" style="left:849px;top:302px;width:8px;border-top:1px dotted #808080"></div>
<div class="a" style="left:858px;top:198px;width:121px;height:16px;background:#3399ff"></div>
<div class="t" style="left:860px;top:200px;color:#fff">Контроль на стертость</div>
<div class="t" style="left:860px;top:216px">Программирование</div>
<div class="t" style="left:860px;top:232px">Сравнение</div>
<div class="t" style="left:860px;top:248px">Чтение</div>
<div class="t" style="left:860px;top:264px">Стирание</div>
<div class="t" style="left:860px;top:280px">Защита</div>
<div class="t" style="left:860px;top:296px;font-weight:bold;font-size:12px">Автоматическое программирование</div>

<div class="a" style="left:1203px;top:198px;width:103px;height:34px;border:1px solid #707070;border-radius:3px;background:linear-gradient(#f2f2f2,#ebebeb 45%,#dddddd 55%,#cfcfcf)"></div>
<div class="t" style="left:1240px;top:209px">Выполнить</div>
<div class="t" style="left:1203px;top:246px">Повторы:</div>
<div class="a" style="left:1203px;top:261px;width:105px;height:21px;border:1px solid #d5dbe5;border-radius:2px;background:#fff"></div>
<div class="t" style="left:1206px;top:265px">1</div>
<svg class="a" style="left:1296px;top:270px" width="8" height="5"><path d="M0 0H8L4.0 4Z" fill="#000"/></svg>
<div class="a" style="left:1204px;top:287px;width:103px;height:23px;border:1px solid #707070;border-radius:3px;background:linear-gradient(#f2f2f2,#ebebeb 45%,#dddddd 55%,#cfcfcf)"></div>
<div class="t" style="left:1226px;top:291px">Редакт. Авто...</div>
<div class="a" style="left:1204px;top:317px;width:103px;height:24px;border:1px solid #707070;border-radius:3px;background:linear-gradient(#f2f2f2,#ebebeb 45%,#dddddd 55%,#cfcfcf)"></div>
<div class="t" style="left:1241px;top:322px">Справка</div>

<div class="a" style="left:835px;top:442px;width:360px;height:15px;background:#f0f0f0;border-top:1px solid #a0a0a0;border-left:1px solid #a0a0a0"></div>
<div class="t" style="left:839px;top:444px;color:#0000cc">Контроль на чистоту памяти</div>

<div class="a" style="left:833px;top:475px;width:481px;height:96px;border:1px solid #d5dfe5;border-radius:3px"></div>
<div class="a" style="left:839px;top:470px;width:42px;height:12px;background:#fff"></div>
<div class="t" style="left:841px;top:469px">Адреса</div>
<div class="t" style="left:860px;top:487px">Начальный в</div>
<div class="t" style="left:861px;top:500px">микросхеме:</div>
<div class="a" style="left:933px;top:491px;width:90px;height:21px;border:1px solid #c5cbd5;border-radius:2px;background:#fff"></div>
<div class="t" style="left:937px;top:495px">0</div>
<svg class="a" style="left:1011px;top:500px" width="8" height="5"><path d="M0 0H8L4.0 4Z" fill="#000"/></svg>
<div class="t" style="left:860px;top:518px">Начальный в</div>
<div class="t" style="left:885px;top:531px">буфере:</div>
<div class="a" style="left:933px;top:524px;width:90px;height:21px;border:1px solid #c5cbd5;border-radius:2px;background:#fff"></div>
<div class="t" style="left:937px;top:528px">0</div>
<svg class="a" style="left:1011px;top:533px" width="8" height="5"><path d="M0 0H8L4.0 4Z" fill="#000"/></svg>
<div class="t" style="left:1053px;top:487px">Конечный в</div>
<div class="t" style="left:1046px;top:500px">микросхеме:</div>
<div class="a" style="left:1120px;top:491px;width:89px;height:21px;border:1px solid #c5cbd5;border-radius:2px;background:#fff"></div>
<div class="t" style="left:1123px;top:495px">0x20FFFF</div>
<svg class="a" style="left:1197px;top:500px" width="8" height="5"><path d="M0 0H8L4.0 4Z" fill="#000"/></svg>
<div class="a" style="left:1041px;top:525px;width:187px;height:13px;background:#ececec"></div>
<div class="t" style="left:1042px;top:525px;color:#008000">Конечный в буфере: &nbsp;0x20FFFF</div>
<div class="a" style="left:835px;top:553px;width:358px;height:15px;background:#f0f0f0;border-top:1px solid #a0a0a0;border-left:1px solid #a0a0a0"></div>
<div class="t" style="left:839px;top:555px;color:#0000cc">Code (4 MB), байты</div>
<div class="a" style="left:1201px;top:544px;width:108px;height:24px;border:1px solid #707070;border-radius:3px;background:linear-gradient(#f2f2f2,#ebebeb 45%,#dddddd 55%,#cfcfcf)"></div>
<div class="t" style="left:1227px;top:550px">По умолчанию</div>

<div class="a" style="left:833px;top:583px;width:481px;height:120px;border:1px solid #d5dfe5;border-radius:3px"></div>
<div class="a" style="left:839px;top:578px;width:142px;height:12px;background:#fff"></div>
<div class="t" style="left:841px;top:577px">Информация об операциях</div>
<div class="a" style="left:835px;top:595px;width:476px;height:100px;background:#f0f0f0;border:1px solid #828790"></div>
<div class="t" style="left:838px;top:598px;color:#008000">Готово к работе</div>

<svg class="a" style="left:1207px;top:202px" width="30" height="26" viewBox="0 0 30 26"><path d="M2 14 L18 6 L27 13 L11 22 Z" fill="#c8b4a0" stroke="#2a2018" stroke-width="1"/><path d="M2 14 L11 22 L11 24 L2 16 Z" fill="#8a7460"/><path d="M11 22 L27 13 L27 15 L11 24 Z" fill="#5a4838"/><path d="M12 23 L12 26 M15 21.5 L15 24.5 M18 20 L18 23 M21 18.5 L21 21.5 M24 17 L24 20" stroke="#2a2018" stroke-width="1.5"/><path d="M1 8 L8 2 L8 14 Z" fill="#f26060" stroke="#f08030" stroke-width=".8"/><path d="M10 2 L10 14 L17 8 Z" fill="#40c040" stroke="#20a020" stroke-width=".8"/></svg>
<svg class="a" style="left:1208px;top:289px" width="17" height="17" viewBox="0 0 17 17"><rect x="0.5" y="2.5" width="13" height="13" rx="1.5" fill="#f4f8fc" stroke="#6a8ad0" stroke-width="1"/><path d="M3 5 V12 H6 M3 8.5 H6" stroke="#1060d8" stroke-width="1.2" fill="none"/><path d="M5 11 L13 3 L15 5 L7 13 L4.5 13.5 Z" fill="#50c040" stroke="#208a20" stroke-width=".6"/><path d="M13 3 L14.5 1.5 L16.5 3.5 L15 5 Z" fill="#e04040"/></svg>
<svg class="a" style="left:1209px;top:322px" width="14" height="14" viewBox="0 0 14 14"><circle cx="7" cy="7" r="6.3" fill="#3a78d8" stroke="#2a5ab0" stroke-width=".8"/><circle cx="6" cy="5" r="3.5" fill="#7aa8ee" opacity=".6"/><path d="M4.8 5.2 Q4.8 3 7 3 Q9.2 3 9.2 5 Q9.2 6.2 7.8 6.8 Q7 7.2 7 8.4" fill="none" stroke="#fff" stroke-width="1.6"/><rect x="6.1" y="9.5" width="1.8" height="1.8" fill="#fff"/></svg>
<svg class="a" style="left:1208px;top:549px" width="14" height="14" viewBox="0 0 14 14"><path d="M1 1 L1 7 L7 7 L4.8 4.8 Q8.5 3 10.5 6 Q11.5 9 9 12.5 L11 13 Q14 9.5 12.5 5.5 Q10 1 3.5 3.3 Z" fill="#3a80e0"/></svg>
<div class="a" style="left:815px;top:104px;width:1px;height:585px;background:#a0a0a0"></div>
<!-- status bar -->
<div class="a" style="left:0;top:689px;width:1335px;height:1px;background:#a0a0a0"></div>
<div class="a" style="left:0;top:690px;width:1335px;height:3px;background:#f0f0f0;overflow:hidden">
<div class="t" style="left:0;top:0;font-weight:bold;font-size:12px;transform:scaleX(.88);transform-origin:0 0">ChipProg-USB  0:00:00  ::</div>
<div class="t" style="left:192px;top:0;font-weight:bold;font-size:12px;color:#e00000;transform:scaleX(.87);transform-origin:0 0">Cypress CY8C21534-24PVXI [ISP Mode with XRES]</div>
<div class="t" style="left:444px;top:0;font-weight:bold;font-size:12px;transform:scaleX(.84);transform-origin:0 0">Т: Напряжение: 5.00 В ::</div>
<div class="a" style="left:1315px;top:1px;width:2px;height:2px;background:#0000ff"></div>
<div class="a" style="left:1328px;top:2px;width:2px;height:1px;background:#0000ff"></div>
</div>
</body></html>
